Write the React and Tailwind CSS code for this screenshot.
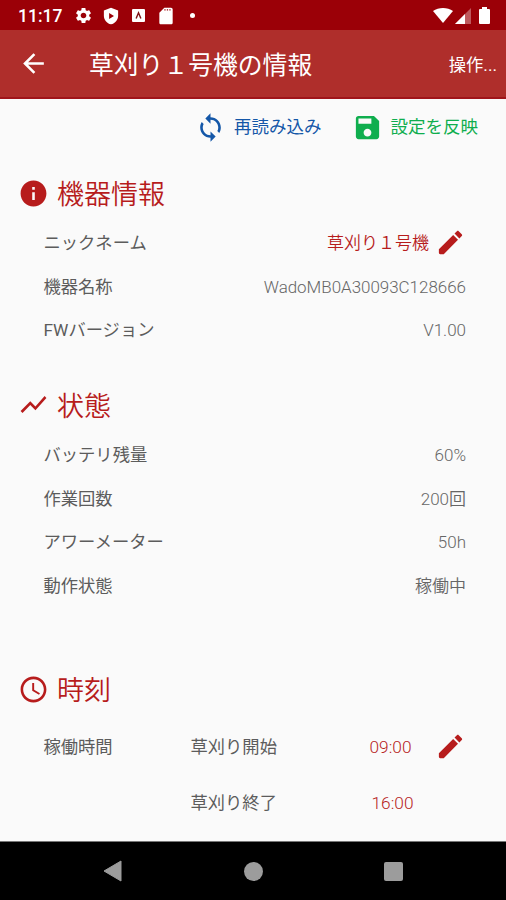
const FONT = "font-['Roboto','Noto_Sans_CJK_JP',sans-serif]";

const PATHS = {
  back: "M20 11H7.83l5.59-5.59L12 4l-8 8 8 8 1.41-1.41L7.83 13H20v-2z",
  sync: "M12 4V1L8 5l4 4V6c3.31 0 6 2.69 6 6 0 1.01-.25 1.97-.7 2.8l1.46 1.46C19.54 15.03 20 13.57 20 12c0-4.42-3.58-8-8-8zm0 14c-3.31 0-6-2.69-6-6 0-1.01.25-1.97.7-2.8L5.24 7.74C4.46 8.97 4 10.43 4 12c0 4.42 3.58 8 8 8v3l4-4-4-4v3z",
  save: "M17 3H5c-1.11 0-2 .9-2 2v14c0 1.1.89 2 2 2h14c1.1 0 2-.9 2-2V7l-4-4zm-5 16c-1.66 0-3-1.34-3-3s1.34-3 3-3 3 1.34 3 3-1.34 3-3 3zm3-10H5V5h10v4z",
  info: "M12 2C6.48 2 2 6.48 2 12s4.48 10 10 10 10-4.48 10-10S17.52 2 12 2zm1 15h-2v-6h2v6zm0-8h-2V7h2v2z",
  chart: "M3.5 18.49l6-6.01 4 4L22 6.92l-1.41-1.41-7.09 7.97-4-4L2 16.99z",
  clock: "M11.99 2C6.47 2 2 6.48 2 12s4.47 10 9.99 10C17.52 22 22 17.52 22 12S17.52 2 11.99 2zM12 20c-4.42 0-8-3.58-8-8s3.58-8 8-8 8 3.58 8 8-3.58 8-8 8zm.5-13H11v6l5.25 3.15.75-1.23-4.5-2.67z",
  edit: "M3 17.25V20a1 1 0 001 1h2.750L17.81 9.94l-3.75-3.75L3 17.25zM20.71 7.04c.39-.39.39-1.02 0-1.41l-2.34-2.34c-.39-.39-1.02-.39-1.41 0l-1.83 1.83 3.75 3.75 1.83-1.83z",
  gear: "M19.14 12.94c.04-.3.06-.61.06-.94 0-.32-.02-.64-.07-.94l2.03-1.58c.18-.14.23-.41.12-.61l-1.92-3.32c-.12-.22-.37-.29-.59-.22l-2.39.96c-.5-.38-1.03-.7-1.62-.94l-.36-2.54c-.04-.24-.24-.41-.48-.41h-3.84c-.24 0-.43.17-.47.41l-.36 2.54c-.59.24-1.13.57-1.62.94l-2.39-.96c-.22-.08-.47 0-.59.22L2.74 8.87c-.12.21-.08.47.12.61l2.03 1.58c-.05.3-.09.63-.09.94s.02.64.07.94l-2.03 1.58c-.18.14-.23.41-.12.61l1.92 3.32c.12.22.37.29.59.22l2.39-.96c.5.38 1.03.7 1.62.94l.36 2.54c.05.24.24.41.48.41h3.84c.24 0 .44-.17.47-.41l.36-2.54c.59-.24 1.13-.56 1.62-.94l2.39.96c.22.08.47 0 .59-.22l1.92-3.32c.12-.22.07-.47-.12-.61l-2.01-1.58zM12 15.6c-1.98 0-3.6-1.62-3.6-3.6s1.62-3.6 3.6-3.6 3.6 1.62 3.6 3.6-1.62 3.6-3.6 3.6z",
  shield: "M12 1L2.500 4.500v7C2.500 17 6.500 21.700 12 23c5.500-1.300 9.500-6 9.500-11.500v-7L12 1zM9.500 8l6.500 4-6.500 4V8z",
  sd: "M18 2h-8L4 8v12c0 1.100.9 2 2 2h12c1.100 0 2-.9 2-2V4c0-1.100-.9-2-2-2zm-6.500 3.500H10V4h1.500v1.500zm3 0H13V4h1.500v1.500zm3 0H16V4h1.500v1.500z",
};

function Icon({ name, className }) {
  return (
    <svg viewBox="0 0 24 24" fill="currentColor" fillRule="evenodd" className={`shrink-0 ${className}`}>
      <path d={PATHS[name]} />
    </svg>
  );
}

function StatusBar() {
  return (
    <div className="flex h-[30px] shrink-0 items-center bg-[#9b0007] pl-[18px] pr-4 pt-px text-white">
      <span className="w-[45px] whitespace-nowrap pt-0.5 text-[17.500px] font-medium leading-none">11:17</span>
      <Icon name="gear" className="ml-[11px] size-[19px]" />
      <Icon name="shield" className="ml-[9px] size-[18px]" />
      <svg viewBox="0 0 12 12" className="ml-[12px] size-[13px]">
        <rect width="12" height="12" rx="1" fill="white" />
        <path d="M3.800 8.800L6 3.500 8.200 8.800" fill="none" stroke="#7d1115" strokeWidth="1.300" />
      </svg>
      <Icon name="sd" className="ml-[11px] size-[20px]" />
      <span className="ml-[14px] size-[5px] rounded-full bg-white" />
      <svg viewBox="0 0 20 15" className="ml-auto h-[15px] w-5" fill="white">
        <path d="M0 3C5.500-1 14.500-1 20 3L10 15z" />
      </svg>
      <svg viewBox="0 0 16 16" className="ml-[2px] size-4" fill="white">
        <path d="M0 16L16 0v16z" opacity=".35" />
        <path d="M0 16L10 6v10z" />
      </svg>
      <svg viewBox="0 0 11 17" className="ml-2 h-[17px] w-[11px]" fill="white">
        <path d="M3 0h5v2h2a1 1 0 011 1v13a1 1 0 01-1 1H1a1 1 0 01-1-1V3a1 1 0 011-1h2z" />
      </svg>
    </div>
  );
}

function Heading({ icon, children }) {
  return (
    <h2 className="flex h-10 items-center pl-[18px] text-[27px] font-[350] leading-10 text-[#b71c1c]">
      <Icon name={icon} className="mr-2 size-[31px]" />
      <span className="pt-1">{children}</span>
    </h2>
  );
}

function Row({ label, children }) {
  return (
    <div className="flex h-[43.600px] items-center justify-between pl-[43.500px] pr-10 pt-px text-[17.300px] leading-6">
      <span className="text-[#5c5c5c]">{label}</span>
      <span className="text-[17px] font-[350] text-[#666]">{children}</span>
    </div>
  );
}

function TimeRow({ label, name, time, editable }) {
  return (
    <div className="flex h-14 items-center pl-[43.500px] text-[17.300px] leading-6 text-[#5c5c5c]">
      <span className="w-[147px] pt-px">{label}</span>
      <span className={editable ? "w-[179px] pt-px" : "w-[181px] pt-px"}>{name}</span>
      <span className="w-[65px] pt-px font-[350] text-[#b71c1c]">{time}</span>
      {editable && <Icon name="edit" className="size-[31px] text-[#b71c1c]" />}
    </div>
  );
}

export default function App() {
  return (
    <div className={`flex h-[900px] w-[506px] flex-col overflow-hidden bg-[#fafafa] ${FONT}`}>
      <StatusBar />
      <header className="flex h-[69px] shrink-0 items-center border-b-2 border-[#a0141a] bg-[#af2e2b] pl-[18px] pr-[9px] text-white">
        <Icon name="back" className="size-[31px]" />
        <h1 className="ml-10 pt-1 text-[24.800px] leading-9">草刈り１号機の情報</h1>
        <span className="ml-auto pt-0.5 text-[17.300px] leading-6">操作...</span>
      </header>
      <main className="flex-1">
        <div className="flex h-14 items-center justify-end pr-7 text-[17.500px] leading-6">
          <button className="flex items-center text-[#1457a8]">
            <Icon name="sync" className="mr-2 size-[31px]" />
            再読み込み
          </button>
          <button className="ml-[30px] flex items-center text-[#0fae4e]">
            <Icon name="save" className="mr-2 size-[31px]" />
            設定を反映
          </button>
        </div>
        <section className="pt-[18px]">
          <Heading icon="info">機器情報</Heading>
          <div className="pt-2">
            <div className="flex h-[43.600px] items-center pl-[43.500px] pr-10 text-[17.300px] leading-6">
              <span className="pt-px text-[#5c5c5c]">ニックネーム</span>
              <span className="ml-auto mr-1.5 pt-px text-[17px] font-[350] text-[#b71c1c]">草刈り１号機</span>
              <Icon name="edit" className="size-[31px] text-[#b71c1c]" />
            </div>
            <Row label="機器名称">
              <span className="text-[16.950px]">WadoMB0A30093C128666</span>
            </Row>
            <Row label="FWバージョン">V1.00</Row>
          </div>
        </section>
        <section className="pt-[33px]">
          <Heading icon="chart">状態</Heading>
          <div className="pt-2">
            <Row label="バッテリ残量">60%</Row>
            <Row label="作業回数">200回</Row>
            <Row label="アワーメーター">50h</Row>
            <Row label="動作状態">稼働中</Row>
          </div>
        </section>
        <section className="pt-[62px]">
          <Heading icon="clock">時刻</Heading>
          <div className="pt-[9px]">
            <TimeRow label="稼働時間" name="草刈り開始" time="09:00" editable />
            <TimeRow name="草刈り終了" time="16:00" />
          </div>
        </section>
      </main>
      <nav className="flex h-[59px] shrink-0 items-center border-t border-[#777] bg-black pl-[103px] text-[#9c9c9c]">
        <svg viewBox="0 0 19 22" className="h-[22px] w-[19px]" fill="currentColor">
          <path d="M18 1v20L1 11z" stroke="currentColor" strokeLinejoin="round" />
        </svg>
        <span className="ml-[122px] size-[19px] rounded-full bg-[#9c9c9c]" />
        <span className="ml-[121px] size-[19px] rounded-[2px] bg-[#9c9c9c]" />
      </nav>
    </div>
  );
}
